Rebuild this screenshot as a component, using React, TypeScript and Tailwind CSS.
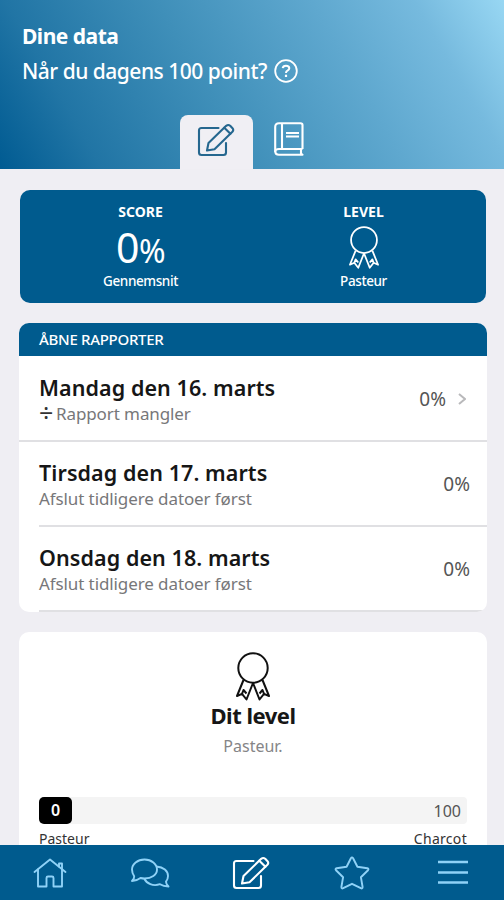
import type { ReactNode } from "react";

type IconProps = { className?: string };

function EditIcon({ className }: IconProps) {
    return (
        <svg className={className} viewBox="0 0 38 34" fill="none" stroke="currentColor" strokeWidth="2.100" strokeLinecap="round" strokeLinejoin="round">
            <path d="M21.500 5H4.500Q2 5 2 7.500V29.500Q2 32 4.500 32H26.500Q29 32 29 29.500V20" />
            <path d="M10 27.500L11.500 20L29.200 2.800Q31.300 1.200 33.200 2.800L35.500 5.200Q37 7 35.400 8.800L17.500 26.300L10 27.500Z" />
            <path d="M27.300 4.700L33.400 10.800" />
        </svg>
    );
}

function BookIcon({ className }: IconProps) {
    return (
        <svg className={className} viewBox="0 0 30 34" fill="none" stroke="currentColor" strokeWidth="2.100" strokeLinejoin="round">
            <path d="M28.500 27V3Q28.500 1.200 26.500 1.200H5Q1.200 1.200 1.200 5V29Q1.200 32.800 5 32.800H28.500L27 31.500V28" />
            <path d="M28.500 27H5Q1.200 27 1.200 30M8 1V26.500" />
            <path d="M12 11H25M12 14.500H25" />
        </svg>
    );
}

function RibbonIcon({ className }: IconProps) {
    return (
        <svg className={className} viewBox="0 0 36 50" fill="none" stroke="currentColor" strokeWidth="2" strokeLinejoin="round">
            <circle cx="18" cy="16" r="14.700" />
            <path d="M8.500 28L2 44L7 41.800L11.500 47.500L18 31L24.500 47.500L29 41.800L34 44L27.500 28" />
            <path d="M7 41.800L8.500 38L11.500 41.500M29 41.800L27.500 38L24.500 41.500" />
        </svg>
    );
}

function HomeIcon({ className }: IconProps) {
    return (
        <svg className={className} viewBox="0 0 34 30" fill="none" stroke="currentColor" strokeWidth="1.900" strokeLinecap="round" strokeLinejoin="round">
            <path d="M1.500 14L17 1.500L32.500 14" />
            <path d="M5 11.500V28.500H13.500V20Q13.500 18.500 15 18.500H19Q20.500 18.500 20.500 20V28.500H29V5.500H26V8.500" />
        </svg>
    );
}

function ChatIcon({ className }: IconProps) {
    return (
        <svg className={className} viewBox="0 0 40 30" fill="none" stroke="currentColor" strokeWidth="1.900" strokeLinejoin="round">
            <path d="M2 23Q4.500 20.500 4.200 18.200Q2 15 2 11.500C2 6 7.500 1.500 14.500 1.500S27 6 27 11.500S21.500 20.500 14.500 20.500Q12.500 20.500 10.500 20Q6.500 23 2 23Z" />
            <path d="M26.500 8.500C33.500 9 38 13 38 18Q38 21.200 36 23.700Q36 26 38.500 28.500Q33.500 28.500 30 26.200C23 28.700 16.500 25.500 14.200 20.500" />
        </svg>
    );
}

function StarIcon({ className }: IconProps) {
    return (
        <svg className={className} viewBox="0 0 36 34" fill="none" stroke="currentColor" strokeWidth="1.900" strokeLinejoin="round">
            <path d="M16.900 2.200Q18 0.500 19.100 2.200L23.400 10.700L33.300 12.200Q35.200 12.700 34 14.200L26.900 21.200L28.600 31Q28.600 33 26.800 32.200L18 27.800L9.200 32.200Q7.400 33 7.400 31L9.100 21.200L2 14.200Q0.800 12.700 2.700 12.200L12.600 10.700Z" />
        </svg>
    );
}

function MenuIcon({ className }: IconProps) {
    return (
        <svg className={className} viewBox="0 0 30 26" fill="none" stroke="currentColor" strokeWidth="2.500">
            <path d="M0 2H30M0 12.500H30M0 22.500H30" />
        </svg>
    );
}

function Header() {
    return (
        <header className="flex h-[169px] shrink-0 flex-col justify-between bg-[linear-gradient(60deg,#005b92_0%,#2175a5_17%,#3f8fb9_42%,#5fa8cf_68%,#76bade_85%,#98d7f3_100%)] text-white">
            <div className="pl-[22px] pt-5">
                <h1 className="text-[21px] font-bold leading-[33px] tracking-[-0.5px]">Dine data</h1>
                <div className="flex items-center gap-[7px]">
                    <p className="pt-px text-[21px] font-medium leading-[34px] tracking-[-0.5px]">Når du dagens 100 point?</p>
                    <svg className="size-6" viewBox="0 0 24 24" fill="none" stroke="currentColor" strokeWidth="1.800">
                        <circle cx="12" cy="12" r="10.800" />
                        <path d="M8.700 9.200Q9 6.700 12 6.700Q15.300 6.700 15.300 9.300Q15.300 10.700 13.500 11.700Q12 12.400 12 14" strokeWidth="2" />
                        <path d="M12 15.700V18" strokeWidth="2.200" />
                    </svg>
                </div>
            </div>
            <nav className="flex pl-[180px]">
                <div className="flex h-[54px] w-[73px] justify-center rounded-t-lg bg-[#f0eff4] pr-0.5 pt-2 text-[#25678f]">
                    <EditIcon className="h-[34px] w-[38px]" />
                </div>
                <div className="flex w-[73px] justify-center pr-0.5 pt-[7px]">
                    <BookIcon className="h-[34px] w-[30px]" />
                </div>
            </nav>
        </header>
    );
}

function ScoreCard() {
    return (
        <section className="ml-5 mt-[21px] grid h-[113px] w-[466px] shrink-0 grid-cols-2 rounded-[10px] bg-[#005b8e] pl-[9px] pr-[11px] text-center text-white">
            <div className="pt-[11px]">
                <h2 className="text-[14px] font-bold leading-[21px]">SCORE</h2>
                <p className="h-[49px] text-[41px] leading-[50px] tracking-[-0.5px]">
                    0<span className="text-[32px]">%</span>
                </p>
                <p className="text-[13.500px] font-medium leading-[20px] tracking-[-0.4px]">Gennemsnit</p>
            </div>
            <div className="flex flex-col items-center pt-[11px]">
                <h2 className="text-[14px] font-bold leading-[21px]">LEVEL</h2>
                <div className="h-[49px] pt-[4px]">
                    <RibbonIcon className="h-[44px] w-8" />
                </div>
                <p className="text-[13.500px] font-medium leading-[20px] tracking-[-0.4px]">Pasteur</p>
            </div>
        </section>
    );
}

type ReportProps = { title: string; children: ReactNode; open?: boolean };

function Report({ title, children, open }: ReportProps) {
    return (
        <div className="flex h-[83px] items-center justify-between pl-5 pr-[17px]">
            <div className="text-[#777779]">
                <h3 className="text-[21.500px] font-semibold leading-[30px] tracking-[0.08px] text-[#161616]">{title}</h3>
                <p className="flex text-[17px] leading-[21px] tracking-[-0.1px]">{children}</p>
            </div>
            <div className="flex items-center gap-3 text-[#555]">
                <span className="pt-0.5 text-[19px]">0%</span>
                {open && (
                    <svg className="mr-1 h-3 w-2" viewBox="0 0 8 12" fill="none" stroke="#b9b9bb" strokeWidth="2">
                        <path d="M1 1L7 6L1 11" />
                    </svg>
                )}
            </div>
        </div>
    );
}

function Reports() {
    return (
        <section className="ml-[19px] mt-5 h-[289px] w-[468px] shrink-0 overflow-hidden rounded-[10px] bg-white">
            <h2 className="h-[33px] bg-[#005b8e] pl-5 text-[15px] font-medium leading-[32px] tracking-[-0.3px] text-white">ÅBNE RAPPORTER</h2>
            <div className="h-px" />
            <Report title="Mandag den 16. marts" open>
                <span className="w-[17px] text-[25px] leading-[18px] text-[#333]">÷</span>
                <span>Rapport mangler</span>
            </Report>
            <div className="h-0.5 bg-[#e0e0e3]" />
            <Report title="Tirsdag den 17. marts">Afslut tidligere datoer først</Report>
            <div className="ml-5 h-0.5 bg-[#e0e0e3]" />
            <Report title="Onsdag den 18. marts">Afslut tidligere datoer først</Report>
            <div className="ml-5 h-0.5 bg-[#e0e0e3]" />
        </section>
    );
}

function LevelCard() {
    return (
        <section className="ml-[19px] mt-5 flex w-[468px] flex-1 flex-col items-center rounded-t-[10px] bg-white px-5 pt-5">
            <RibbonIcon className="h-[50px] w-9 text-[#111]" />
            <h2 className="-mt-0.5 text-[22px] font-bold leading-[30px] tracking-[-0.5px] text-[#161616]">Dit level</h2>
            <p className="pt-px text-[16px] leading-[30px] text-[#858587]">Pasteur.</p>
            <div className="mt-9 flex h-[27px] w-full shrink-0 items-center justify-between rounded bg-[#f4f4f4]">
                <span className="flex h-[27px] w-[33px] items-center justify-center rounded-[5px] bg-black pb-0.5 text-[16px] font-semibold text-white">0</span>
                <span className="pr-1.5 text-[16px] text-[#555]">100</span>
            </div>
            <div className="flex w-full justify-between pt-[3px] text-[14px] leading-[24px] text-[#333]">
                <span>Pasteur</span>
                <span className="tracking-[0.3px]">Charcot</span>
            </div>
        </section>
    );
}

function TabBar() {
    return (
        <nav className="flex h-[55px] shrink-0 items-center bg-[#005b8e] text-[#8fd2f7]">
            <div className="flex w-[100px] justify-center"><HomeIcon className="h-[30px] w-[34px]" /></div>
            <div className="flex w-[102px] justify-center"><ChatIcon className="h-[30px] w-10" /></div>
            <div className="flex w-[101px] justify-center text-white"><EditIcon className="h-[34px] w-[38px]" /></div>
            <div className="flex w-[102px] justify-center"><StarIcon className="h-[34px] w-9" /></div>
            <div className="flex w-[102px] justify-center"><MenuIcon className="h-[26px] w-[30px]" /></div>
        </nav>
    );
}

export default function App() {
    return (
        <div className="flex h-[900px] w-[504px] flex-col overflow-hidden bg-[#efeef3] font-['Noto_Sans',sans-serif]">
            <Header />
            <main className="flex min-h-0 flex-1 flex-col overflow-hidden">
                <ScoreCard />
                <Reports />
                <LevelCard />
            </main>
            <TabBar />
        </div>
    );
}
